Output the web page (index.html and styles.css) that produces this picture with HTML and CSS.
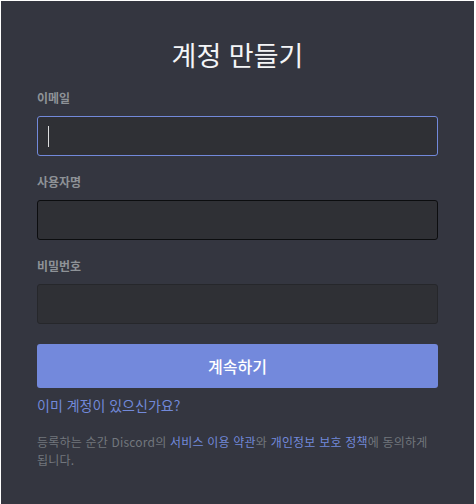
FILE: index.html
```html
<!DOCTYPE html>
<html lang="ko">
<head>
    <meta charset="UTF-8">
    <meta name="viewport" content="width=device-width, initial-scale=1.0">
    <title>계정 만들기</title>
    <link rel="stylesheet" href="styles.css">
</head>
<body>
    <div class="panel">
        <h1 class="title">계정 만들기</h1>

        <form class="form">
            <div class="field">
                <label class="label">이메일</label>
                <div class="input focused"><span class="caret"></span></div>
            </div>
            <div class="field">
                <label class="label">사용자명</label>
                <div class="input dark"></div>
            </div>
            <div class="field">
                <label class="label">비밀번호</label>
                <div class="input"></div>
            </div>

            <button type="button" class="submit">계속하기</button>
            <a class="login-link">이미 계정이 있으신가요?</a>

            <p class="terms">등록하는 순간 Discord의 <a>서비스 이용 약관</a>와 <a>개인정보 보호 정책</a>에 동의하게 됩니다.</p>
        </form>
    </div>
</body>
</html>
```

FILE: styles.css
```css
body {
    margin: 0;
    background: #ffffff;
    font-family: "Noto Sans CJK KR", "Noto Sans", sans-serif;
}

.panel {
    margin: 1px 2px 0 1px;
    height: 503px;
    box-sizing: border-box;
    background: #343640;
    padding: 34px 36px 0 36px;
}

.title {
    margin: 0;
    text-align: center;
    font-size: 27px;
    font-weight: 400;
    line-height: 40px;
    color: #f4f5f7;
}

.form {
    margin-top: 15px;
}

.field {
    margin-bottom: 18px;
}

.label {
    display: block;
    font-size: 12px;
    font-weight: 700;
    line-height: 16px;
    color: #8e9297;
    margin-bottom: 10px;
}

.input {
    height: 40px;
    box-sizing: border-box;
    border: 1px solid #26272b;
    border-radius: 3px;
    background: #2f3035;
    padding: 9px 10px;
}

.input.dark {
    border-color: #0c0d0f;
}

.input.focused {
    border-color: #7289da;
}

.caret {
    display: block;
    width: 1px;
    height: 21px;
    background: #dcddde;
}

.submit {
    display: block;
    width: 100%;
    height: 44px;
    margin-top: 20px;
    border: none;
    border-radius: 3px;
    background: #7389dc;
    color: #ffffff;
    font-family: inherit;
    font-size: 16px;
    font-weight: 500;
}

.login-link {
    display: block;
    margin-top: 7px;
    font-size: 14px;
    line-height: 20px;
    color: #7289da;
}

.terms {
    margin: 18px 0 0;
    font-size: 12px;
    line-height: 18px;
    letter-spacing: 0.2px;
    color: #72767d;
}

.terms a {
    color: #7289da;
}
```
